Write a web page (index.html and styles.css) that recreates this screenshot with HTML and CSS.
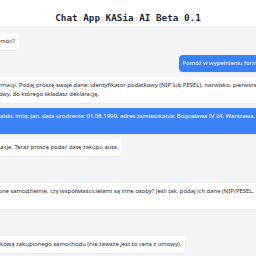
FILE: index.html
```html
<!DOCTYPE html>
<html lang="pl">
<head>
    <meta charset="UTF-8">
    <meta name="viewport" content="width=device-width, initial-scale=1.0">
    <title>Chat App KASia AI Beta 0.1</title>
    <link rel="stylesheet" href="styles.css">
</head>
<body>
    <header class="app-header">
        <h1>Chat App KASia AI Beta 0.1</h1>
    </header>

    <main class="chat-scroll">
        <div class="chat" id="chat">
            <div class="msg bot">Witaj! Jak mogę Ci pomóc?</div>
            <div class="msg user">Pomóż w wypełnieniu formularza PCC-3 za auto</div>
            <div class="msg bot">Potrzebuję kilku informacji. Podaj proszę swoje dane: identyfikator podatkowy (NIP lub PESEL), nazwisko, pierwsze imię, datę urodzenia,<br>adres i urząd podatkowy, do którego składasz deklarację.</div>
            <div class="msg user">PESEL 99080112345, Kowalski, imię: Jan, data urodzenia: 01.08.1999, adres zamieszkania: Bogusława IV 24, Warszawa, mój urząd skarbowy:<br>US Warszawa-Bemowo</div>
            <div class="msg bot">Dziękuję za te informacje. Teraz proszę podać datę zakupu auta.</div>
            <div class="msg user">12.03.2024</div>
            <div class="msg bot">Czy auto było zakupione samodzielnie, czy współwłaścicielami są inne osoby? Jeśli tak, podaj ich dane (NIP/PESEL,<br>imię, nazwisko).</div>
            <div class="msg user">Samodzielnie</div>
            <div class="msg bot">Podaj mi wartość rynkową zakupionego samochodu (nie zawsze jest to cena z umowy).</div>
        </div>
    </main>
</body>
</html>
```

FILE: styles.css
```css
body { margin: 0; height: 100vh; overflow: hidden; background-color: #F3F4F6; font-family: "Noto Sans", "Open Sans", sans-serif; color: #1F2937; }
.app-header { background-color: #FFFFFF; padding: 12px 0 3px; text-align: center; }
.app-header h1 { margin: 0; font-family: "DejaVu Sans Mono", monospace; font-size: 9.3px; line-height: 11px; font-weight: 700; color: #1F2937; white-space: nowrap; }
.chat-scroll { display: flex; justify-content: center; }
.chat { flex: none; width: 388px; display: flex; flex-direction: column; gap: 5px; padding: 7px 4px; box-sizing: border-box; }
.msg { padding: 4px; border-radius: 4px; font-size: 5.9px; line-height: 9px; white-space: nowrap; box-shadow: 0 1px 1px rgba(0, 0, 0, 0.05); }
.bot { align-self: flex-start; background-color: #FFFFFF; color: #1F2937; }
.user { align-self: flex-end; background-color: #3B82F6; color: #FFFFFF; }
```
